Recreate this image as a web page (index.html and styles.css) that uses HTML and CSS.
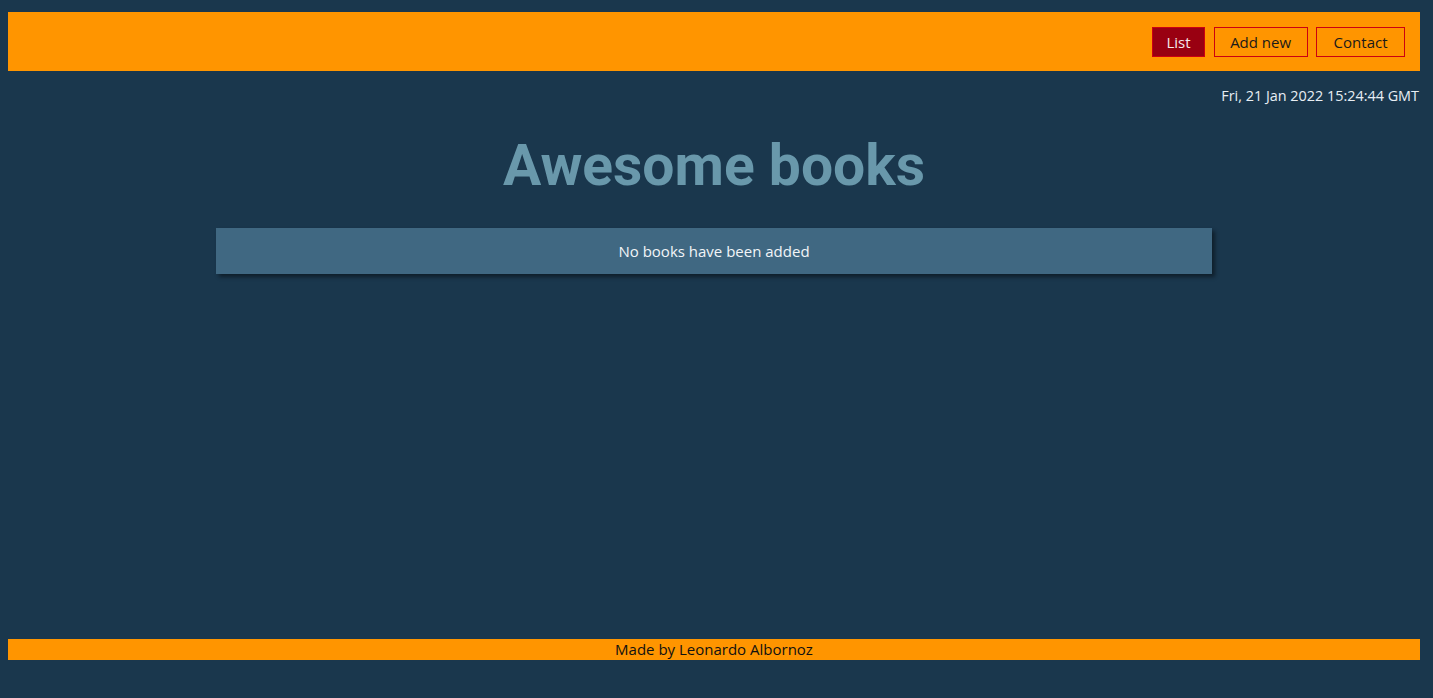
FILE: index.html
```html
<!DOCTYPE html>
<html lang="en">
<head>
<meta charset="utf-8">
<title>Awesome books</title>
<link rel="stylesheet" href="styles.css">
</head>
<body>
  <header class="topbar">
    <nav class="nav">
      <a class="nav-btn nav-btn--active" href="#">List</a>
      <a class="nav-btn" href="#">Add new</a>
      <a class="nav-btn nav-btn--wide" href="#">Contact</a>
    </nav>
  </header>
  <main class="main">
    <p class="date">Fri, 21 Jan 2022 15:24:44 GMT</p>
    <h1 class="title">Awesome books</h1>
    <section class="books">
      <p class="empty">No books have been added</p>
    </section>
  </main>
  <footer class="footer">Made by Leonardo Albornoz</footer>
</body>
</html>
```
FILE: styles.css
```css
* { box-sizing: border-box; }
html, body { margin: 0; }
body {
  background: #1a374d;
  font-family: "Open Sans", "Liberation Sans", sans-serif;
  min-height: 100vh;
  padding: 12px 13px 38px 8px;
  display: flex;
  flex-direction: column;
}
.topbar {
  background: #ff9500;
  height: 59px;
  display: flex;
  justify-content: flex-end;
  align-items: center;
  padding: 1px 15px 0 0;
}
.nav { display: flex; gap: 8.5px; }
.nav-btn {
  display: flex;
  align-items: center;
  justify-content: center;
  height: 30px;
  padding: 0 15.5px;
  border: 1px solid #cc0011;
  color: #1a1a1a;
  text-decoration: none;
  font-size: 15px;
}
.nav-btn--active {
  background: #990011;
  color: #f4eaea;
  padding: 0 13.5px;
}
.nav-btn--wide { padding: 0 16.5px; }
.main { display: flex; flex-direction: column; align-items: center; }
.date {
  align-self: flex-end;
  margin: 16px 1px 0 0;
  color: #e8eef4;
  font-size: 14.4px;
  line-height: 18px;
}
.title {
  margin: 27px 0 0;
  font-family: Roboto, sans-serif;
  font-weight: 700;
  font-size: 57px;
  line-height: 68px;
  color: #6998ab;
}
.books {
  width: 996px;
  margin-top: 28px;
  background: #406882;
  box-shadow: 3px 3px 4px rgba(0, 0, 0, 0.45);
  height: 46px;
  display: flex;
  align-items: center;
  justify-content: center;
}
.empty {
  margin: 0;
  color: #f2f5f8;
  font-size: 15px;
}
.footer {
  margin-top: auto;
  background: #ff9500;
  height: 21px;
  text-align: center;
  font-size: 15px;
  line-height: 21px;
  color: #111;
}
```
